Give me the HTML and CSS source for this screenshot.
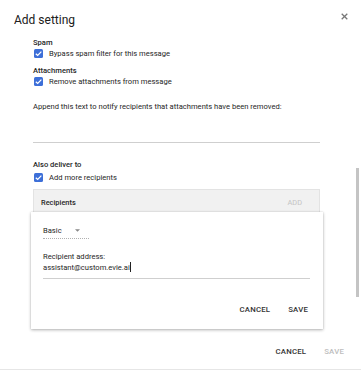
FILE: index.html
```html
<!DOCTYPE html>
<html lang="en">

<head>
    <meta charset="UTF-8">
    <meta name="viewport" content="width=device-width, initial-scale=1.0">
    <title>Add setting</title>

    <link rel="stylesheet" href="styles.css">
</head>

<body>
    <div class="dialog">
        <div class="dialog-header">
            <p class="dialog-title">Add setting</p>
            <button class="close" type="button">
                <svg width="7" height="7" viewBox="0 0 10 10">
                    <path d="M1 1L9 9M9 1L1 9" stroke="#777" stroke-width="1.8" fill="none"/>
                </svg>
            </button>
        </div>

        <div class="dialog-body">
            <p class="section-label">Spam</p>
            <label class="check-row">
                <span class="checkbox"><svg viewBox="0 0 10 10"><path d="M2 5.2L4.1 7.2L8.2 2.9" stroke="#fff" stroke-width="1.4" fill="none"/></svg></span>
                Bypass spam filter for this message
            </label>

            <p class="section-label gap">Attachments</p>
            <label class="check-row">
                <span class="checkbox"><svg viewBox="0 0 10 10"><path d="M2 5.2L4.1 7.2L8.2 2.9" stroke="#fff" stroke-width="1.4" fill="none"/></svg></span>
                Remove attachments from message
            </label>

            <p class="append-label">Append this text to notify recipients that attachments have been removed:</p>
            <div class="text-field"></div>

            <p class="section-label deliver">Also deliver to</p>
            <label class="check-row deliver-row">
                <span class="checkbox"><svg viewBox="0 0 10 10"><path d="M2 5.2L4.1 7.2L8.2 2.9" stroke="#fff" stroke-width="1.4" fill="none"/></svg></span>
                Add more recipients
            </label>

            <div class="recipients-head">
                <span class="recipients-title">Recipients</span>
                <span class="add-btn">ADD</span>
            </div>

            <div class="card">
                <div class="select">
                    <span>Basic</span>
                    <svg width="5" height="3" viewBox="0 0 10 5"><path d="M0 0L5 5L10 0Z" fill="#888"/></svg>
                </div>
                <p class="field-label">Recipient address:</p>
                <div class="address">assistant@custom.evie.ai<span class="cursor"></span></div>
                <div class="card-actions">
                    <span class="btn">CANCEL</span>
                    <span class="btn">SAVE</span>
                </div>
            </div>
        </div>

        <div class="dialog-actions">
            <span class="btn">CANCEL</span>
            <span class="btn disabled">SAVE</span>
        </div>

        <div class="scrollbar"></div>
    </div>
</body>

</html>
```

FILE: styles.css
```css
body,
*,
html {
    padding: 0;
    margin: 0;
    box-sizing: border-box;
}

body {
    width: 361px;
    height: 371px;
    overflow: hidden;
    background-color: #fff;
    font-family: Roboto, 'Liberation Sans', sans-serif;
    color: #262626;
}

.dialog {
    position: relative;
    width: 361px;
    height: 370px;
    border-bottom: 1px solid #e6e6e6;
}

.dialog-header {
    display: flex;
    justify-content: space-between;
    align-items: flex-start;
    padding: 13px 13px 0 14px;
    height: 36px;
}

.dialog-title {
    font-size: 12px;
    line-height: 14px;
    font-weight: 400;
    color: #202020;
}

.close {
    border: none;
    background: none;
    width: 8px;
    height: 8px;
    margin-top: -1px;
    display: flex;
    align-items: center;
    justify-content: center;
}

.dialog-body {
    padding: 0 41px 0 33px;
    font-size: 7.6px;
}

.section-label {
    font-weight: 500;
    line-height: 11px;
    height: 11px;
    margin-top: 1px;
}

.section-label.gap {
    margin-top: 6px;
}

.section-label.deliver {
    margin-top: 16px;
}

.check-row {
    display: flex;
    align-items: center;
    gap: 6px;
    height: 11px;
    line-height: 11px;
    padding-left: 1px;
}

.deliver-row {
    margin-top: 2px;
}

.checkbox {
    display: inline-flex;
    width: 9px;
    height: 9px;
    border-radius: 1.5px;
    background-color: #3d6fd8;
}

.checkbox svg {
    width: 9px;
    height: 9px;
}

.append-label {
    margin-top: 14px;
    line-height: 11px;
}

.text-field {
    height: 31px;
    border-bottom: 1px solid #cfcfcf;
}

.recipients-head {
    margin-top: 6px;
    height: 25px;
    display: flex;
    align-items: center;
    justify-content: space-between;
    padding: 0 17px 0 7px;
    background-color: #f1f1f1;
    border: 1px solid #e3e3e3;
    border-bottom: none;
}

.recipients-title {
    font-weight: 500;
    font-size: 7.4px;
}

.add-btn {
    color: #c4c4c4;
    font-size: 7.4px;
}

.card {
    margin: -2px -3px 0 -2px;
    padding: 13px 12px 0 12px;
    height: 117px;
    background-color: #fff;
    box-shadow: 0 1px 3px rgba(0, 0, 0, 0.3), 0 0 1px rgba(0, 0, 0, 0.15);
}

.select {
    display: flex;
    align-items: center;
    gap: 13px;
    width: 46px;
    height: 14px;
    line-height: 11px;
    padding-bottom: 2px;
    border-bottom: 1px dotted #b0b0b0;
}

.field-label {
    margin-top: 12px;
    line-height: 11px;
}

.address {
    line-height: 12px;
    height: 17px;
    margin-right: 1px;
    border-bottom: 1px solid #cfcfcf;
}

.cursor {
    display: inline-block;
    width: 1px;
    height: 10px;
    background-color: #222;
    vertical-align: -2px;
}

.card-actions {
    display: flex;
    justify-content: flex-end;
    gap: 18px;
    padding-right: 3px;
    margin-top: 26px;
}

.btn {
    font-size: 7.8px;
    font-weight: 500;
    letter-spacing: 0.2px;
    color: #333;
}

.btn.disabled {
    color: #bdbdbd;
}

.dialog-actions {
    display: flex;
    justify-content: flex-end;
    gap: 18px;
    padding: 18px 17px 0 0;
}

.scrollbar {
    position: absolute;
    right: 2px;
    top: 168px;
    width: 3px;
    height: 129px;
    background-color: #c4c4c4;
}
```
